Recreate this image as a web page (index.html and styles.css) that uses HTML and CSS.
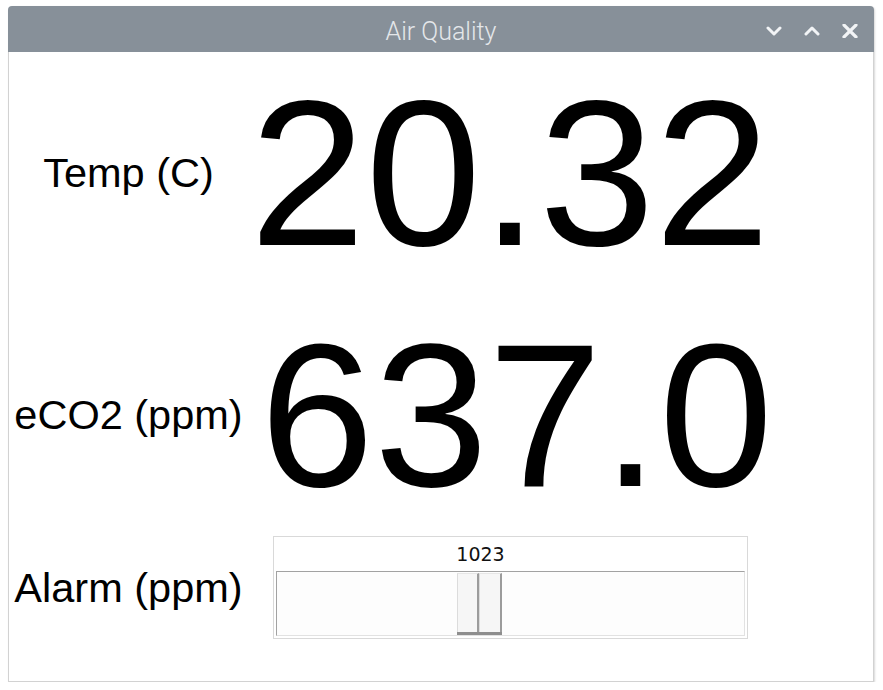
FILE: index.html
```html
<!DOCTYPE html>
<html lang="en">
<head>
    <meta charset="UTF-8">
    <title>Air Quality</title>
    <link rel="stylesheet" href="styles.css">
</head>
<body>

<div class="window">
    <div class="titlebar">
        <span></span>
        <span class="title">Air Quality</span>
        <div class="title-buttons">
            <svg class="tb-icon" viewBox="0 0 16 12"><path d="M2 3 L8 9 L14 3"/></svg>
            <svg class="tb-icon" viewBox="0 0 16 12"><path d="M2 9 L8 3 L14 9"/></svg>
            <svg class="tb-icon close" viewBox="0 0 16 14"><path d="M2 1 L14 13 M14 1 L2 13"/></svg>
        </div>
    </div>

    <div class="content">
        <div class="label">Temp (C)</div>
        <div class="reading">20.32</div>

        <div class="label">eCO2 (ppm)</div>
        <div class="reading reading-wide">637.0</div>

        <div class="label">Alarm (ppm)</div>
        <div class="scale-cell">
            <div class="scale">
                <div class="scale-value-row">
                    <!-- label follows the slider position -->
                    <span class="scale-value" style="left: 205px;">1023</span>
                </div>
                <div class="trough">
                    <div class="handle" style="left: 180px;">
                        <div class="grip"></div>
                        <div class="grip"></div>
                    </div>
                </div>
            </div>
        </div>
    </div>
</div>

</body>
</html>
```

FILE: styles.css
```css
body {
    margin: 0;
    padding: 0;
    background-color: #ffffff;
    font-family: 'Liberation Sans', Arial, sans-serif;
}
.window {
    margin: 6px 0 0 8px;
    width: 866px;
    height: 676px;
    display: flex;
    flex-direction: column;
    border-radius: 4px 4px 0 0;
    box-shadow: 1px 1px 2px rgba(0, 0, 0, 0.15);
}
.titlebar {
    height: 46px;
    flex-shrink: 0;
    background-color: #879099;
    border-radius: 4px 4px 0 0;
    display: grid;
    grid-template-columns: 1fr auto 1fr;
    align-items: center;
}
.title {
    font-family: Roboto, 'Liberation Sans', sans-serif;
    font-weight: 300;
    font-size: 25px;
    color: #e4e7ea;
    padding-top: 4px;
}
.title-buttons {
    display: flex;
    justify-content: flex-end;
    align-items: center;
    gap: 22px;
    padding-right: 16px;
    padding-top: 4px;
}
.tb-icon {
    width: 16px;
    height: 12px;
    fill: none;
    stroke: #f2f4f6;
    stroke-width: 3;
    stroke-linecap: round;
    stroke-linejoin: round;
}
.tb-icon.close {
    height: 14px;
    stroke-width: 3.2;
}
.content {
    flex: 1;
    background-color: #ffffff;
    border: 1px solid #d2d2d2;
    border-top: none;
    display: grid;
    grid-template-columns: 239px 524px;
    grid-template-rows: 242px 242px 103px;
    align-items: center;
}
.label {
    font-size: 41.5px;
    color: #000;
    text-align: center;
    white-space: nowrap;
}
.reading {
    font-size: 208px;
    line-height: 242px;
    color: #000;
    text-align: center;
    white-space: nowrap;
}
.reading-wide {
    font-size: 205px;
    padding-left: 12px;
}
.scale-cell {
    display: flex;
    justify-content: center;
    align-self: start;
}
.scale {
    width: 475px;
    height: 103px;
    box-sizing: border-box;
    border: 1px solid #d9d9d9;
    padding: 0 2px 2px 2px;
    display: flex;
    flex-direction: column;
}
.scale-value-row {
    position: relative;
    height: 34px;
}
.scale-value {
    position: absolute;
    top: 0;
    transform: translateX(-50%);
    font-family: 'DejaVu Sans', sans-serif;
    font-size: 19px;
    line-height: 34px;
    color: #111;
}
.trough {
    position: relative;
    flex: 1;
    background-color: #fdfdfd;
    border-top: 1px solid #a2a2a2;
    border-left: 1px solid #a2a2a2;
    border-right: 1px solid #e2e2e2;
    border-bottom: 1px solid #e2e2e2;
}
.handle {
    position: absolute;
    top: 1px;
    width: 45px;
    height: 62px;
    box-sizing: border-box;
    display: flex;
    border-bottom: 3px solid #8e8e8e;
}
.grip {
    flex: 1;
    background-color: #f6f6f6;
    border-top: 1px solid #e6e6e6;
    border-left: 1px solid #dcdcdc;
    border-right: 2px solid #9c9c9c;
}
```
